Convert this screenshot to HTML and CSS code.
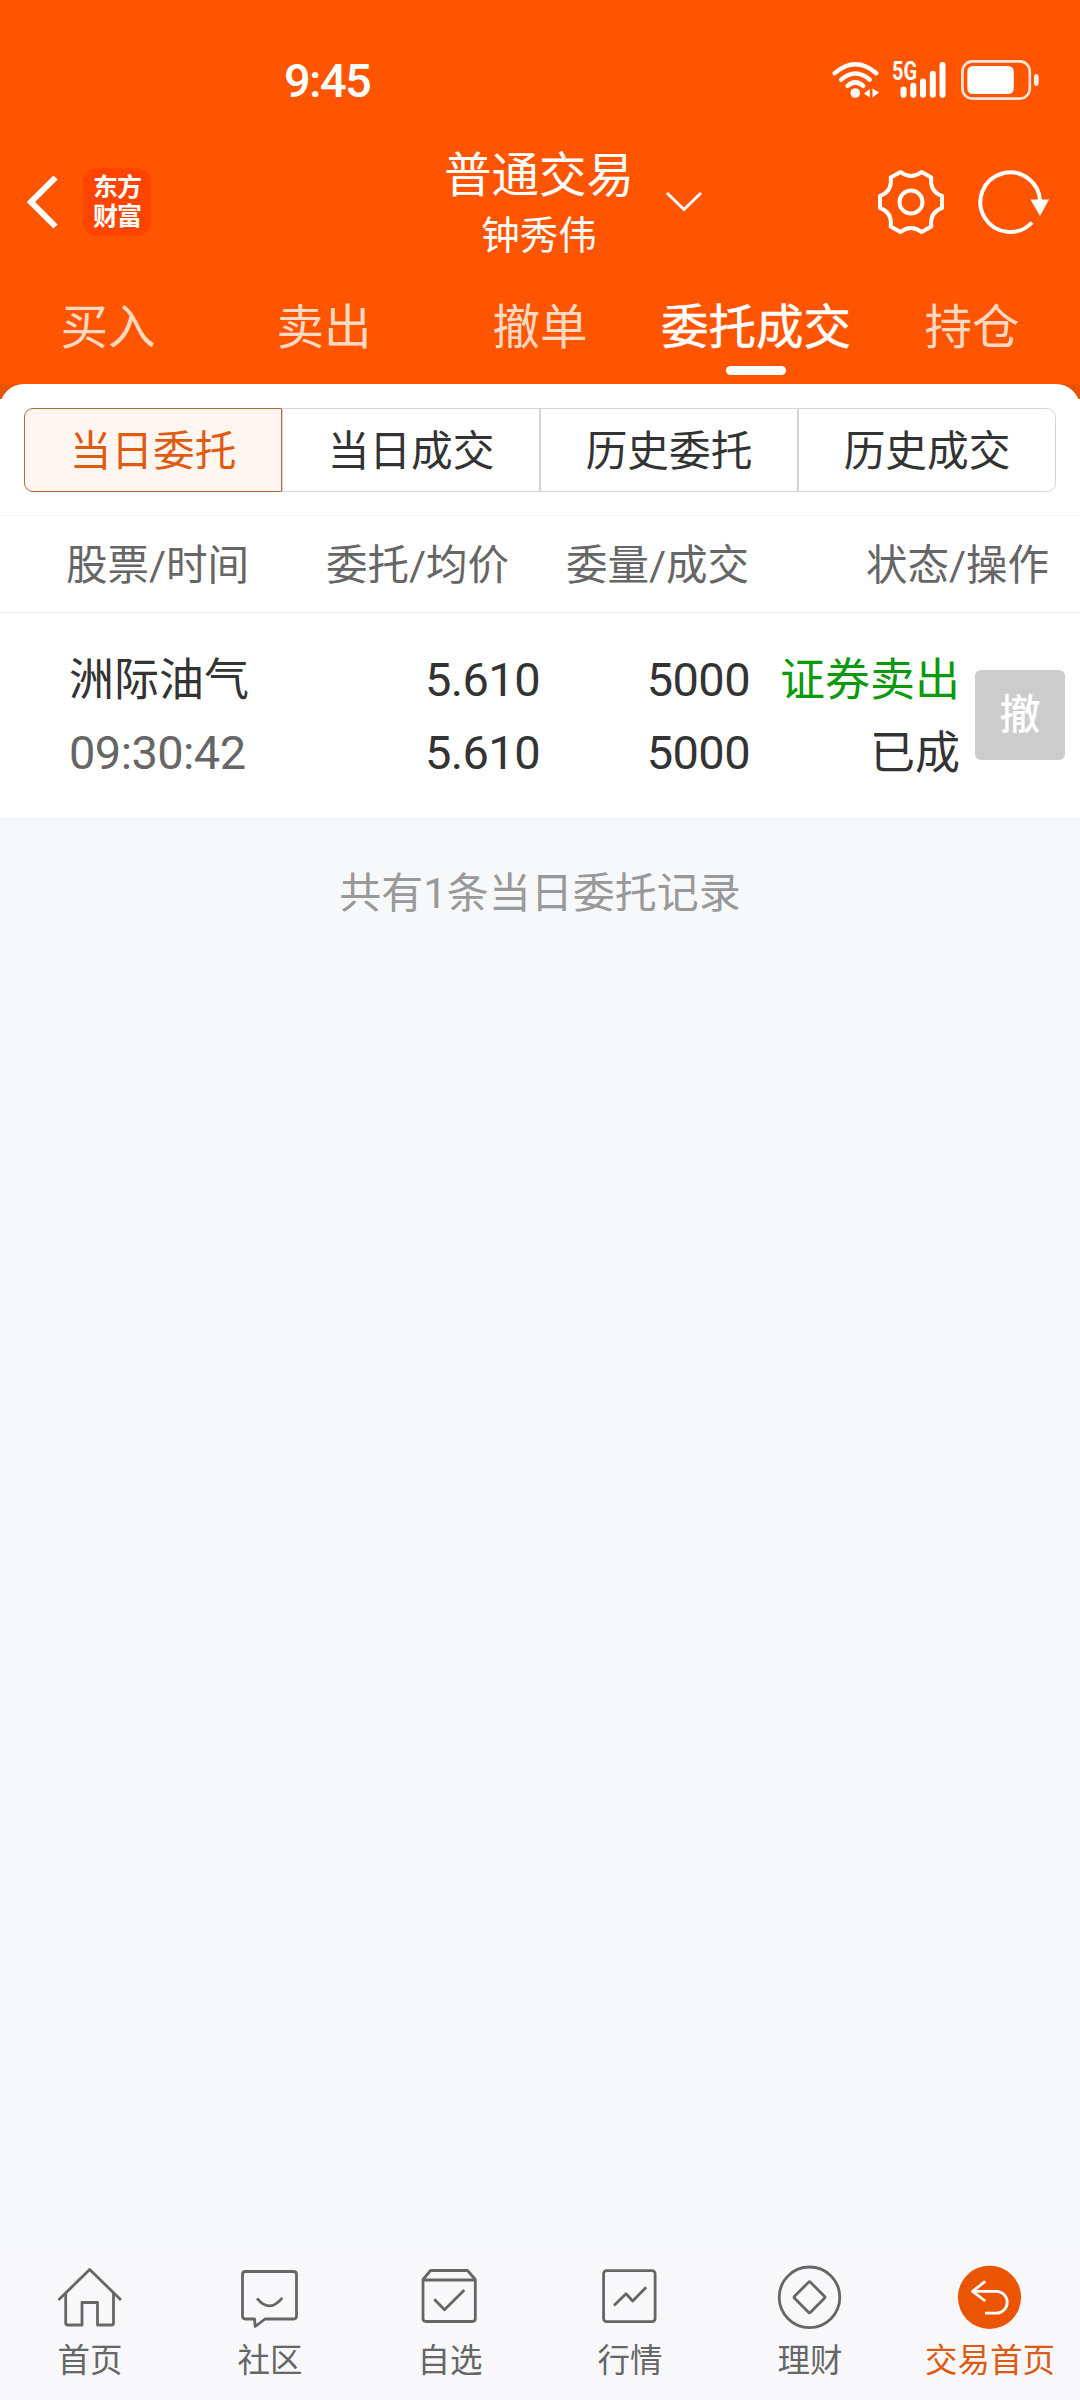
FILE: index.html
```
<!DOCTYPE html>
<html lang="zh-CN">
<head>
    <meta charset="UTF-8">
    <meta name="viewport" content="width=device-width, initial-scale=1.0">
    <title>普通交易</title>
    <link rel="stylesheet" href="styles.css">
</head>
<body>

<header class="header">
    <div class="status-bar">
        <span class="clock">9:45</span>
        <div class="status-icons">
            <svg class="wifi" width="48" height="40" viewBox="0 0 48 40">
                <g fill="none" stroke="#fff" stroke-width="4.4" stroke-linecap="round">
                    <path d="M2.6 13.2 Q23.3 -4.6 44.4 13.2"/>
                    <path d="M9.2 19.7 Q23.3 7.4 37.8 19.7"/>
                    <path d="M15.5 25.8 Q23.3 19 31.2 25.8"/>
                </g>
                <circle cx="23.3" cy="33" r="4.8" fill="#fff"/>
                <path d="M37.8 29 V37.5 L32 33.5z M40.5 28.5 V37.5 L47 32.5z" fill="#fff"/>
            </svg>
            <div class="signal">
                <span class="signal-label">5G</span>
                <svg width="56" height="40" viewBox="0 0 56 40">
                    <g stroke="#fff" stroke-width="6" stroke-linecap="round">
                        <path d="M11.5 29.5 V34.8"/>
                        <path d="M21.3 25.8 V34.8"/>
                        <path d="M31 21.5 V34.8"/>
                        <path d="M40.8 13.8 V34.8"/>
                        <path d="M50.5 5 V34.8"/>
                    </g>
                </svg>
            </div>
            <svg class="battery" width="80" height="40" viewBox="0 0 80 40">
                <rect x="1.4" y="1.4" width="67.4" height="37.2" rx="10" fill="none" stroke="#fff" stroke-opacity=".85" stroke-width="2.6"/>
                <rect x="6.3" y="6" width="46.5" height="28" rx="5.5" fill="#fff"/>
                <rect x="73" y="14" width="4.6" height="12" rx="2.3" fill="#fff" fill-opacity=".9"/>
            </svg>
        </div>
    </div>

    <div class="nav">
        <div class="nav-left">
            <svg width="36" height="60" viewBox="0 0 36 60">
                <path d="M30.5 5.5 L6 30 L30.5 54.5" fill="none" stroke="#fff" stroke-width="6"/>
            </svg>
            <div class="logo"><span>东方</span><span>财富</span></div>
        </div>
        <div class="nav-title">
            <h1>普通交易</h1>
            <p>钟秀伟</p>
        </div>
        <div class="nav-right">
            <svg class="arrow-down" width="40" height="24" viewBox="0 0 40 24">
                <path d="M3 3 L20 19.5 L37 3" fill="none" stroke="#fff" stroke-width="3"/>
            </svg>
            <svg class="gear" width="72" height="72" viewBox="0 0 72 72">
                <path d="M25.5 6 Q36 14 46.5 6 L56.3 11.6 Q54.5 25.5 67 30 V42 Q54.5 46.5 56.3 60.4 L46.5 66 Q36 58 25.5 66 L15.7 60.4 Q17.5 46.5 5 42 V30 Q17.5 25.5 15.7 11.6z" fill="none" stroke="#fff" stroke-width="4" stroke-linejoin="round"/>
                <circle cx="36" cy="36" r="11.5" fill="none" stroke="#fff" stroke-width="4"/>
            </svg>
            <svg class="refresh" width="72" height="72" viewBox="0 0 72 72">
                <path d="M57 56.5 A29.8 29.8 0 1 1 65 36" fill="none" stroke="#fff" stroke-width="4"/>
                <path d="M55.5 33.5 H74 L65 50z" fill="#fff"/>
            </svg>
        </div>
    </div>

    <nav class="tabs">
        <a class="tab">买入</a>
        <a class="tab">卖出</a>
        <a class="tab">撤单</a>
        <a class="tab active">委托成交</a>
        <a class="tab">持仓</a>
    </nav>
</header>

<main class="content">
    <div class="panel-top">
        <div class="panel">
            <div class="segments">
                <button class="segment active">当日委托</button>
                <button class="segment">当日成交</button>
                <button class="segment">历史委托</button>
                <button class="segment">历史成交</button>
            </div>
        </div>
    </div>

    <div class="list-head">
        <span class="col-name">股票/时间</span>
        <span class="col-price">委托/均价</span>
        <span class="col-amount">委量/成交</span>
        <span class="col-status">状态/操作</span>
    </div>

    <div class="order">
        <div class="order-name">
            <div>洲际油气</div>
            <div class="time">09:30:42</div>
        </div>
        <div class="order-price">
            <div>5.610</div>
            <div>5.610</div>
        </div>
        <div class="order-amount">
            <div>5000</div>
            <div>5000</div>
        </div>
        <div class="order-status">
            <div class="sell">证券卖出</div>
            <div>已成</div>
        </div>
        <button class="cancel">撤</button>
    </div>

    <p class="summary">共有1条当日委托记录</p>
</main>

<footer class="tabbar">
    <a class="tabbar-item">
        <svg width="72" height="72" viewBox="0 0 72 72">
            <path d="M4.5 40 L35.7 9.5 L67 40"/>
            <path d="M11.7 33 V63 Q11.7 65 13.7 65 H28 V42.5 H43.5 V65 H57.5 Q59.5 65 59.5 63 V33"/>
        </svg>
        <span>首页</span>
    </a>
    <a class="tabbar-item">
        <svg width="72" height="72" viewBox="0 0 72 72">
            <path d="M11.5 11.5 H59.5 Q62.5 11.5 62.5 14.5 V56 Q62.5 59 59.5 59 H31 L21.2 66.5 L20.5 59 H11.5 Q8.5 59 8.5 56 V14.5 Q8.5 11.5 11.5 11.5z"/>
            <path d="M23 38.3 Q35.5 53.5 48.3 37.8"/>
        </svg>
        <span>社区</span>
    </a>
    <a class="tabbar-item">
        <svg width="72" height="72" viewBox="0 0 72 72">
            <path d="M9 19.5 L16.5 10.5 H53.5 L61.3 19.5 V58.5 Q61.3 61.5 58.3 61.5 H12 Q9 61.5 9 58.5z"/>
            <path d="M9 20 H61.3"/>
            <path d="M20.3 39.3 L30.5 49.8 L50.3 30"/>
        </svg>
        <span>自选</span>
    </a>
    <a class="tabbar-item">
        <svg width="72" height="72" viewBox="0 0 72 72">
            <rect x="9.6" y="10.6" width="51.5" height="51" rx="3"/>
            <path d="M20 45.5 L32 33.7 L38.7 41 L52.2 27.3"/>
        </svg>
        <span>行情</span>
    </a>
    <a class="tabbar-item">
        <svg width="72" height="72" viewBox="0 0 72 72">
            <circle cx="35.5" cy="37.3" r="30.3"/>
            <rect x="24.2" y="26" width="22.6" height="22.6" rx="1.5" transform="rotate(45 35.5 37.3)"/>
        </svg>
        <span>理财</span>
    </a>
    <a class="tabbar-item active">
        <svg width="72" height="72" viewBox="0 0 72 72">
            <circle class="disc" cx="35.5" cy="37.3" r="31.6"/>
            <path d="M31.2 21.3 L18.5 31.4 L31.2 41"/>
            <path d="M18.5 31.4 H42.3 A10.9 10.9 0 0 1 42.3 53.2 H31"/>
        </svg>
        <span>交易首页</span>
    </a>
</footer>

</body>
</html>
```
FILE: styles.css
```
* {
    box-sizing: border-box;
}
body {
    margin: 0;
    width: 1080px;
    height: 2400px;
    display: flex;
    flex-direction: column;
    background-color: #f7f8fa;
    color: #333;
    font-family: Roboto, "Noto Sans CJK SC", sans-serif;
}
h1, p {
    margin: 0;
    font-weight: 400;
}
button {
    font-family: inherit;
    padding: 0;
    margin: 0;
}
svg {
    display: block;
    overflow: visible;
}

/* header */
.header {
    height: 384px;
    background-color: #ff5500;
    color: #fff;
}
.status-bar {
    height: 142px;
    padding: 60px 39px 0 284px;
    display: flex;
    justify-content: space-between;
    align-items: flex-start;
}
.clock {
    font-size: 47px;
    font-weight: 500;
    line-height: 41px;
    letter-spacing: -1.6px;
}
.status-icons {
    display: flex;
}
.wifi {
    margin-right: 12px;
}
.signal {
    position: relative;
    margin-right: 13px;
}
.signal-label {
    position: absolute;
    left: 0;
    top: 1px;
    font-size: 25px;
    font-weight: 700;
    line-height: 22px;
    transform: scaleX(.8);
    transform-origin: left;
}
.nav {
    height: 120px;
    padding: 0 29px 0 25px;
    display: grid;
    grid-template-columns: 1fr 200px 1fr;
    align-items: center;
}
.nav-left {
    display: flex;
    align-items: center;
    gap: 22px;
}
.logo {
    width: 68px;
    height: 68px;
    border-radius: 14px;
    background-color: #ff4400;
    display: flex;
    flex-direction: column;
    align-items: center;
    justify-content: center;
    font-size: 25px;
    font-weight: 700;
    line-height: 29px;
    letter-spacing: -1px;
}
.nav-title {
    text-align: center;
    padding: 4px 0 0 2px;
}
.nav-title h1 {
    font-size: 47.5px;
    line-height: 60px;
}
.nav-title p {
    margin-bottom: -4px;
    font-size: 38.5px;
    line-height: 60px;
}
.nav-right {
    display: flex;
    align-items: center;
}
.arrow-down {
    margin-left: 26px;
}
.gear {
    margin-left: auto;
    margin-right: 28px;
}
.refresh {
    margin-right: 4px;
}
.tabs {
    height: 122px;
    display: grid;
    grid-template-columns: repeat(5, 1fr);
}
.tab {
    display: flex;
    flex-direction: column;
    align-items: center;
    padding-top: 31px;
    font-size: 47.5px;
    line-height: 70px;
    color: #ffd9c2;
}
.tab.active {
    color: #fff;
    -webkit-text-stroke: .5px #fff;
}
.tab.active::after {
    content: "";
    width: 60px;
    height: 9px;
    margin-top: 3px;
    border-radius: 5px;
    background-color: #fff;
}

/* order list */
.content {
    flex: 1;
}
.panel-top {
    background: linear-gradient(#e85400 15px, #fff 15px);
}
.panel {
    height: 131px;
    padding: 24px 24px 0;
    border-radius: 24px 24px 0 0;
    background-color: #fff;
}
.segments {
    display: grid;
    grid-template-columns: repeat(4, 1fr);
}
.segment {
    height: 84px;
    padding-top: 3px;
    border: 1px solid #d4d6d6;
    background-color: #fff;
    color: #333;
    font-size: 41.7px;
    line-height: 80px;
}
.segment:first-child {
    border-radius: 9px 0 0 9px;
}
.segment:last-child {
    border-radius: 0 9px 9px 0;
}
.segment.active {
    border-color: #b5693a;
    background-color: #fff6f2;
    color: #e05a10;
}
.list-head {
    height: 98px;
    padding: 3px 32px 0 66px;
    display: grid;
    grid-template-columns: 260px 240px 300px 1fr;
    align-items: center;
    border-top: 1px solid #f5f5f5;
    border-bottom: 1px solid #ebebeb;
    background-color: #fff;
    font-size: 41.5px;
    line-height: 60px;
    color: #666;
    white-space: nowrap;
}
.col-status {
    text-align: right;
}
.order {
    height: 204px;
    padding: 30px 15px 0 69px;
    display: grid;
    grid-template-columns: 190px 281px 210px 210px 1fr;
    background-color: #fff;
    font-size: 45px;
    line-height: 73px;
}
.order-name > div:first-child, .order-status {
    position: relative;
    top: 1px;
}
.order-price, .order-amount, .order-status {
    text-align: right;
}
.order-price, .order-amount, .time {
    font-size: 47px;
    letter-spacing: -.6px;
}
.time {
    color: #666;
}
.sell {
    color: #0a9a0a;
}
.cancel {
    justify-self: end;
    width: 90px;
    height: 90px;
    margin-top: 27px;
    border: 0;
    border-radius: 6px;
    background-color: #ccc;
    color: #fff;
    font-size: 41px;
    font-weight: 500;
    line-height: 90px;
}
.summary {
    padding-top: 47px;
    text-align: center;
    font-size: 42px;
    line-height: 60px;
    color: #999;
}

/* bottom bar */
.tabbar {
    height: 153px;
    padding-top: 13px;
    display: grid;
    grid-template-columns: repeat(6, 1fr);
    background-color: #f8f8fb;
}
.tabbar-item {
    display: flex;
    flex-direction: column;
    align-items: center;
    font-size: 32.5px;
    line-height: 58px;
    color: #666;
}
.tabbar-item svg {
    fill: none;
    stroke: #666;
    stroke-width: 2.8;
    stroke-linejoin: round;
}
.tabbar-item.active {
    color: #dd5a14;
}
.tabbar-item.active svg {
    stroke: #fff;
}
.tabbar-item .disc {
    fill: #ea5504;
    stroke: none;
}
```
